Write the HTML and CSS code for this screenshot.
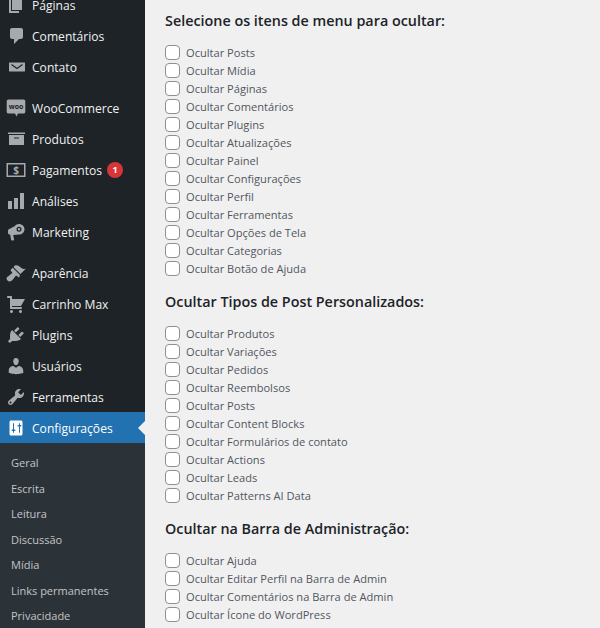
FILE: index.html
```html
<!DOCTYPE html>
<html lang="pt-BR">
<head>
<meta charset="utf-8">
<title>Configurações</title>
<link rel="stylesheet" href="styles.css">
</head>
<body>
<div class="page">
  <nav class="sidebar">
    <ul class="menu">
      <li class="item"><svg class="ico" viewBox="0 0 20 20"><path d="M6 15V2h10v13H6zm-1 1h8v2H3V5h2v11z"/></svg><span>Páginas</span></li>
      <li class="item"><svg class="ico" viewBox="0 0 20 20"><path d="M6 2h9c1.100 0 2 .9 2 2v7c0 1.100-.9 2-2 2h-2l-5 5v-5H6c-1.100 0-2-.9-2-2V4c0-1.100.9-2 2-2z"/></svg><span>Comentários</span></li>
      <li class="item"><svg class="ico" viewBox="0 0 20 20"><path d="M3.500 5.500h15c.3 0 .5.2.5.5v8c0 .3-.2.5-.5.5h-15c-.3 0-.5-.2-.5-.5V6c0-.3.2-.5.5-.5z"/><path class="env" d="M5.500 7.500 11 11.500l5.500-4"/></svg><span>Contato</span></li>
      <li class="item sep"><svg class="ico" viewBox="0 0 20 20"><path d="M2.500 1.500h15c1 0 1.800.8 1.800 1.800v10.400c0 1-.8 1.800-1.800 1.800H12l-1.500 3-1.500-3H2.500C1.500 15.500.7 14.700.7 13.700V3.300C.7 2.300 1.500 1.500 2.500 1.500z"/><text class="woo" x="10" y="10.500" text-anchor="middle">woo</text></svg><span>WooCommerce</span></li>
      <li class="item"><svg class="ico" viewBox="0 0 20 20"><path d="M19 3.500v1.500H2V3.500h17zM3 6h15v10H3V6zm5 2.500v1h5v-1H8z" fill-rule="evenodd"/></svg><span>Produtos</span></li>
      <li class="item"><svg class="ico" viewBox="0 0 20 20"><path d="M.5 3h19v14H.5V3zm1.500 1.500v11h16v-11H2z" fill-rule="evenodd"/><text class="dollar" x="10" y="13.500" text-anchor="middle">$</text></svg><span>Pagamentos</span><b class="badge">1</b></li>
      <li class="item"><svg class="ico" viewBox="0 0 20 20"><path d="M18 18V2h-4v16h4zm-6 0V7H8v11h4zm-6 0v-8H2v8h4z"/></svg><span>Análises</span></li>
      <li class="item"><svg class="ico" viewBox="0 0 20 20"><path d="M13 2c3 0 5.500 2.300 5.500 5.300S16 12.600 13 12.600l-5.800.5.9 4.700c0 .4-.4.7-.9.7H6c-.5 0-.8-.3-.9-.7l-.9-5C3 12.600 2 11.800 2 10.700V8.700c0-1 .8-1.800 1.900-2L9 3.900C10 2.700 11.400 2 13 2zm0 2.800a2.500 2.500 0 1 0 0 5 2.500 2.500 0 0 0 0-5zm0 1.300a1.200 1.200 0 1 1 0 2.400 1.200 1.200 0 0 1 0-2.400z" fill-rule="evenodd"/></svg><span>Marketing</span></li>
      <li class="item sep"><svg class="ico" viewBox="0 0 20 20"><path d="M14.480 11.060 7.410 3.990l1.500-1.500c.5-.56 2.300-.47 3.510.32 1.210.8 1.430 1.280 2.910 2.100 1.180.64 2.450 1.260 4.450.85zm-.71.71L6.700 4.700 4.930 6.470c-.39.39-.39 1.020 0 1.410l1.060 1.060c.39.39.39 1.030 0 1.420-.6.600-1.430 1.110-2.210 1.690-.35.260-.7.530-1.010.840C1.430 13.230.5 14.500.5 15.500c0 1.500 1.600 3 3 3 1 0 2.300-1 3.600-2.300.310-.31.580-.66.840-1.010.580-.78 1.090-1.610 1.690-2.210.39-.39 1.030-.39 1.420 0l1.060 1.060c.39.39 1.020.39 1.410 0z"/></svg><span>Aparência</span></li>
      <li class="item"><svg class="ico" viewBox="0 0 20 20"><path d="M6 13h9c.55 0 1 .45 1 1s-.45 1-1 1H5c-.55 0-1-.45-1-1V4H2c-.55 0-1-.45-1-1s.45-1 1-1h3c.55 0 1 .45 1 1v2h13l-4 7H6v1zm-.5 3c.83 0 1.500.67 1.500 1.500S6.330 19 5.500 19 4 18.330 4 17.500 4.670 16 5.500 16zm9 0c.83 0 1.500.67 1.500 1.500s-.67 1.500-1.500 1.500-1.500-.67-1.500-1.500.67-1.500 1.500-1.500z"/></svg><span>Carrinho Max</span></li>
      <li class="item"><svg class="ico" viewBox="0 0 20 20"><path d="M13.110 4.360 9.870 7.600 8 5.730l3.240-3.240c.35-.34 1.050-.2 1.560.32.52.51.66 1.210.31 1.550zm-8 1.770.91-1.120 9.010 9.010-1.190.84c-.71.71-2.630 1.160-3.820 1.160H6.140L4.900 17.260c-.59.59-1.540.59-2.120 0-.59-.58-.59-1.530 0-2.120l1.240-1.240v-3.880c0-1.130.4-3.190 1.090-3.890zm7.260 3.970 3.240-3.240c.34-.35 1.040-.21 1.550.31.52.51.66 1.210.31 1.550l-3.240 3.250z"/></svg><span>Plugins</span></li>
      <li class="item"><svg class="ico" viewBox="0 0 20 20"><path d="M10 9.250c-2.270 0-2.730-3.440-2.730-3.440C7 4.020 7.820 2 9.970 2c2.160 0 2.980 2.020 2.710 3.810 0 0-.41 3.440-2.680 3.440zm0 2.570L12.720 10c2.390 0 4.520 2.330 4.520 4.530v2.490s-3.650 1.130-7.240 1.130c-3.650 0-7.240-1.130-7.240-1.130v-2.490c0-2.250 1.940-4.480 4.470-4.480z"/></svg><span>Usuários</span></li>
      <li class="item"><svg class="ico" viewBox="0 0 20 20"><path d="M16.680 9.770c-1.340 1.340-3.300 1.670-4.950.99l-5.410 6.520c-.99.99-2.590.99-3.580 0s-.99-2.590 0-3.570l6.520-5.420c-.68-1.650-.35-3.610.99-4.950 1.280-1.280 3.120-1.620 4.720-1.060l-2.890 2.890 2.820 2.820 2.860-2.870c.53 1.580.18 3.390-1.080 4.650zM3.810 16.210c.4.39 1.040.39 1.430 0 .4-.4.4-1.040 0-1.430-.39-.4-1.030-.4-1.430 0-.39.39-.39 1.030 0 1.430z"/></svg><span>Ferramentas</span></li>
      <li class="item current"><svg class="ico" viewBox="0 0 20 20"><path d="M16.500 16V4c0-.8-.7-1.500-1.500-1.500H5c-.8 0-1.500.7-1.500 1.500v12c0 .8.7 1.500 1.500 1.500h10c.8 0 1.500-.7 1.500-1.500zM8 11.500h.7c.5 0 .8.3.8.8s-.3.7-.8.7H8v1.500c0 .28-.22.5-.5.5s-.5-.22-.5-.5V13h-.7c-.5 0-.8-.3-.8-.7s.3-.8.8-.8H7V5.500c0-.28.22-.5.5-.5s.5.22.5.5v6zm5-3h-.7c-.5 0-.8-.3-.8-.8s.3-.7.8-.7h.7V5.500c0-.28.22-.5.5-.5s.5.22.5.5V7h.7c.5 0 .8.3.8.7s-.3.8-.8.8H14v6c0 .28-.22.5-.5.5s-.5-.22-.5-.5v-6z" fill-rule="evenodd"/></svg><span>Configurações</span></li>
    </ul>
    <ul class="submenu">
      <li>Geral</li>
      <li>Escrita</li>
      <li>Leitura</li>
      <li>Discussão</li>
      <li>Mídia</li>
      <li>Links permanentes</li>
      <li>Privacidade</li>
    </ul>
  </nav>
  <main class="content">
    <section class="group">
      <h2>Selecione os itens de menu para ocultar:</h2>
      <label><input type="checkbox">Ocultar Posts</label>
      <label><input type="checkbox">Ocultar Mídia</label>
      <label><input type="checkbox">Ocultar Páginas</label>
      <label><input type="checkbox">Ocultar Comentários</label>
      <label><input type="checkbox">Ocultar Plugins</label>
      <label><input type="checkbox">Ocultar Atualizações</label>
      <label><input type="checkbox">Ocultar Painel</label>
      <label><input type="checkbox">Ocultar Configurações</label>
      <label><input type="checkbox">Ocultar Perfil</label>
      <label><input type="checkbox">Ocultar Ferramentas</label>
      <label><input type="checkbox">Ocultar Opções de Tela</label>
      <label><input type="checkbox">Ocultar Categorias</label>
      <label><input type="checkbox">Ocultar Botão de Ajuda</label>
    </section>
    <section class="group">
      <h2>Ocultar Tipos de Post Personalizados:</h2>
      <label><input type="checkbox">Ocultar Produtos</label>
      <label><input type="checkbox">Ocultar Variações</label>
      <label><input type="checkbox">Ocultar Pedidos</label>
      <label><input type="checkbox">Ocultar Reembolsos</label>
      <label><input type="checkbox">Ocultar Posts</label>
      <label><input type="checkbox">Ocultar Content Blocks</label>
      <label><input type="checkbox">Ocultar Formulários de contato</label>
      <label><input type="checkbox">Ocultar Actions</label>
      <label><input type="checkbox">Ocultar Leads</label>
      <label><input type="checkbox">Ocultar Patterns AI Data</label>
    </section>
    <section class="group">
      <h2>Ocultar na Barra de Administração:</h2>
      <label><input type="checkbox">Ocultar Ajuda</label>
      <label><input type="checkbox">Ocultar Editar Perfil na Barra de Admin</label>
      <label><input type="checkbox">Ocultar Comentários na Barra de Admin</label>
      <label><input type="checkbox">Ocultar Ícone do WordPress</label>
    </section>
  </main>
</div>
</body>
</html>
```
FILE: styles.css
```css
* { box-sizing: border-box; }
html, body { margin: 0; padding: 0; height: 100%; overflow: hidden; }
body { background: #f0f0f1; font-family: "Open Sans", "Noto Sans", sans-serif; }
.page { display: flex; height: 628px; overflow: hidden; }
.sidebar { flex: 0 0 145px; background: #1d2327; height: 628px; overflow: hidden; }
.menu, .submenu { list-style: none; margin: 0; padding: 0; }
.menu { margin-top: -11px; }
.item { position: relative; display: flex; align-items: center; height: 31px; padding-left: 6px; color: #f0f0f1; font-size: 12.100px; }
.item span { padding-top: 1px; }
.item.sep { margin-top: 10px; }
.ico { flex: 0 0 20px; width: 20px; height: 20px; margin-right: 6px; fill: #a7aaad; }
.env { fill: none; stroke: #1d2327; stroke-width: 1.300px; }
.woo { font: 700 7px "Open Sans", sans-serif; fill: #1d2327; }
.dollar { font: 700 10px "Open Sans", sans-serif; fill: #a7aaad; }
.badge { display: flex; align-items: center; justify-content: center; width: 16px; height: 16px; margin-left: 5px; border-radius: 50%; background: #d63638; color: #fff; font-size: 9px; font-weight: 700; }
.current { background: #2271b1; color: #fff; }
.current .ico { fill: #fff; }
.current::after { content: ""; position: absolute; right: 0; top: 50%; margin-top: -7px; border: 7px solid transparent; border-right-color: #f0f0f1; border-left-width: 0; }
.submenu { background: #2c3338; padding-top: 7px; }
.submenu li { height: 25.500px; line-height: 25.500px; padding-left: 11px; font-size: 11px; color: #c3c4c7; }
.content { flex: 1; padding: 10px 0 0 20px; min-width: 0; }
.group { margin-bottom: 13.500px; }
h2 { margin: 0 0 11.500px; height: 22px; line-height: 22px; font-size: 14.350px; font-weight: 600; color: #1d2327; }
label { display: flex; align-items: center; height: 18px; font-size: 11.100px; color: #50575e; }
input { appearance: none; width: 15px; height: 15px; margin: 0 6px 0 0; background: #fff; border: 1px solid #8c8f94; border-radius: 4px; }
```
